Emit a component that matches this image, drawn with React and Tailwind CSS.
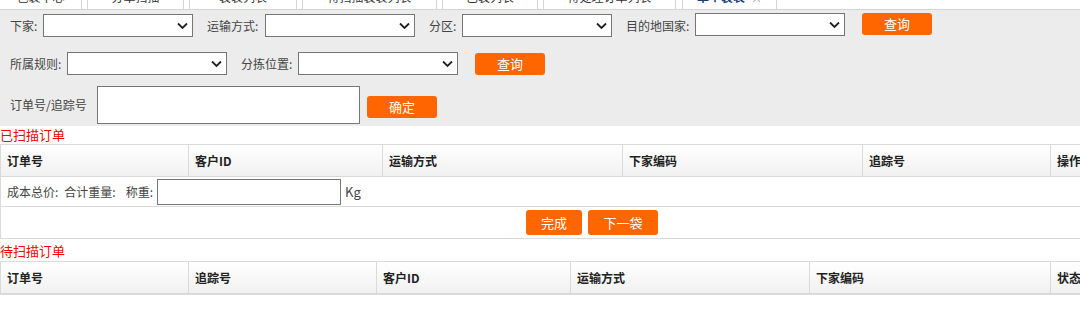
const tabs = [
  { label: '包裹中心', w: 'w-[82px]' },
  { label: '分单扫描', w: 'w-[97px]' },
  { label: '装袋列表', w: 'w-[108px]' },
  { label: '待扫描装袋列表', w: 'w-[135px]' },
  { label: '已装列表', w: 'w-[96px]' },
  { label: '待处理订单列表', w: 'w-[133px]' },
];

const Chevron = () => (
  <svg className="absolute right-[4px] top-1/2 -translate-y-1/2" width="11" height="7" viewBox="0 0 11 7">
    <polyline points="1,1 5.5,5.5 10,1" fill="none" stroke="#222" strokeWidth="1.8" />
  </svg>
);

const Select = ({ w }) => (
  <div className={`relative ${w} h-[23px] bg-white border border-[#767676]`}>
    <Chevron />
  </div>
);

const Btn = ({ children, className = '' }) => (
  <button className={`h-[22px] bg-[#ff6600] text-white text-[13px] leading-[22px] rounded-[3px] ${className}`}>
    {children}
  </button>
);

const Label = ({ children, className = '' }) => (
  <span className={`text-[12px] text-[#444] whitespace-nowrap ${className}`}>{children}</span>
);

const scannedCols = [
  { label: '订单号', w: 'w-[187px]' },
  { label: '客户ID', w: 'w-[194px]' },
  { label: '运输方式', w: 'w-[240px]' },
  { label: '下家编码', w: 'w-[240px]' },
  { label: '追踪号', w: 'w-[188px]' },
  { label: '操作', w: 'w-[135px]' },
];

const pendingCols = [
  { label: '订单号', w: 'w-[187px]' },
  { label: '追踪号', w: 'w-[188px]' },
  { label: '客户ID', w: 'w-[194px]' },
  { label: '运输方式', w: 'w-[239px]' },
  { label: '下家编码', w: 'w-[241px]' },
  { label: '状态', w: 'w-[135px]' },
];

const HeaderRow = ({ cols }) => (
  <div className="flex h-[32px] bg-linear-to-b from-white to-[#f1f1f1] border-b border-[#dadada]">
    {cols.map((c, i) => (
      <div
        key={c.label}
        className={`${c.w} shrink-0 flex items-center pl-[6px] text-[12px] font-bold text-[#222] ${i > 0 ? 'border-l border-[#dadada]' : ''}`}
      >
        {c.label}
      </div>
    ))}
  </div>
);

export default function App() {
  return (
    <div className="w-[1080px] h-[324px] overflow-hidden bg-white" style={{ fontFamily: '"Microsoft YaHei", "Noto Sans CJK SC", sans-serif' }}>
      {/* Tabs (cut off at top) */}
      <div className="flex h-[10px] overflow-hidden border-b border-[#d4d4d4]">
        {tabs.map((t, i) => (
          <div
            key={t.label}
            className={`${t.w} shrink-0 h-full flex items-end justify-center bg-white border-x border-[#d4d4d4] ${i > 0 ? 'ml-[5px]' : 'border-l-0'}`}
          >
            <span className="text-[12px] leading-[12px] mb-[6px] text-[#333]">{t.label}</span>
          </div>
        ))}
        <div className="w-[95px] shrink-0 ml-[6px] h-full flex items-end justify-center gap-[6px] bg-white border-x border-[#d4d4d4]">
          <span className="text-[12px] leading-[12px] mb-[6px] font-bold text-[#1c3f73]">单个装袋</span>
          <span className="text-[11px] leading-[11px] mb-[5px] text-[#8aa0c0]">×</span>
        </div>
      </div>

      {/* Filters */}
      <div className="bg-[#ececec] pt-[4px] pb-[2px] pl-[10px]">
        <div className="flex items-center h-[23px]">
          <Label className="w-[33px]">下家:</Label>
          <Select w="w-[150px]" />
          <Label className="ml-[14px] w-[58px]">运输方式:</Label>
          <Select w="w-[150px]" />
          <Label className="ml-[14px] w-[33px]">分区:</Label>
          <Select w="w-[150px]" />
          <Label className="ml-[14px] w-[69px]">目的地国家:</Label>
          <div className="-mt-[2px]">
            <Select w="w-[150px]" />
          </div>
          <Btn className="ml-[17px] w-[70px] -mt-[3px]">查询</Btn>
        </div>
        <div className="flex items-center h-[23px] mt-[15px]">
          <Label className="w-[57px]">所属规则:</Label>
          <Select w="w-[160px]" />
          <Label className="ml-[14px] w-[57px]">分拣位置:</Label>
          <Select w="w-[160px]" />
          <Btn className="ml-[17px] w-[70px]">查询</Btn>
        </div>
        <div className="flex items-center h-[38px] mt-[11px]">
          <Label className="w-[87px]">订单号/追踪号</Label>
          <div className="w-[263px] h-[38px] bg-white border border-[#767676]" />
          <Btn className="ml-[7px] w-[70px] mt-[4px]">确定</Btn>
        </div>
      </div>

      {/* Scanned */}
      <div className="h-[18px] flex items-center text-[13px] text-[#ff0000]">已扫描订单</div>
      <div className="w-[1184px] border border-[#dadada]">
        <HeaderRow cols={scannedCols} />
        <div className="flex items-center h-[30px] border-b border-[#dadada] pl-[6px] text-[12px] text-[#444]">
          <span>成本总价:</span>
          <span className="ml-[6px]">合计重量:</span>
          <span className="ml-[10px]">称重:</span>
          <div className="ml-[4px] w-[184px] h-[26px] bg-white border border-[#767676]" />
          <span className="ml-[4px] text-[13px]">Kg</span>
        </div>
        <div className="flex items-center justify-center gap-[6px] h-[31px]">
          <Btn className="w-[56px] h-[25px] leading-[25px]">完成</Btn>
          <Btn className="w-[70px] h-[25px] leading-[25px]">下一袋</Btn>
        </div>
      </div>

      {/* Pending */}
      <div className="h-[22px] flex items-center pt-[2px] text-[13px] text-[#ff0000]">待扫描订单</div>
      <div className="w-[1184px] border border-[#dadada]">
        <HeaderRow cols={pendingCols} />
      </div>
    </div>
  );
}
